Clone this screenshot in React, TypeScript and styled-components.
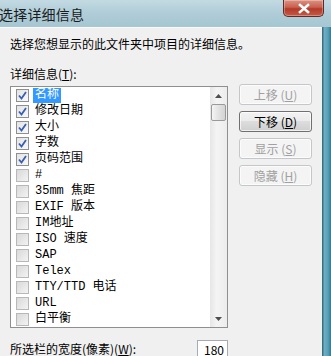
import React from "react";
import styled, { createGlobalStyle } from "styled-components";

// Column choices shown in the list (checked = visible in the folder view)
const columns: { name: string; checked: boolean }[] = [
  { name: "名称", checked: true },
  { name: "修改日期", checked: true },
  { name: "大小", checked: true },
  { name: "字数", checked: true },
  { name: "页码范围", checked: true },
  { name: "#", checked: false },
  { name: "35mm 焦距", checked: false },
  { name: "EXIF 版本", checked: false },
  { name: "IM地址", checked: false },
  { name: "ISO 速度", checked: false },
  { name: "SAP", checked: false },
  { name: "Telex", checked: false },
  { name: "TTY/TTD 电话", checked: false },
  { name: "URL", checked: false },
  { name: "白平衡", checked: false },
];

const buttons = [
  { label: "上移", key: "U", enabled: false },
  { label: "下移", key: "D", enabled: true },
  { label: "显示", key: "S", enabled: false },
  { label: "隐藏", key: "H", enabled: false },
];

const App: React.FC = () => {
  return (
    <>
      <GlobalStyle />
      <Window>
        <TitleBar>
          <Title>选择详细信息</Title>
          <CloseButton>
            <svg width="14" height="11" viewBox="0 0 14 11">
              <path d="M3 2 L11 9 M11 2 L3 9" stroke="#ffffff" strokeWidth="2.6" strokeLinecap="square" />
            </svg>
          </CloseButton>
        </TitleBar>
        <Body>
          <Content>
            <Intro>选择您想显示的此文件夹中项目的详细信息。</Intro>
            <Label>
              详细信息(<u>T</u>):
            </Label>
            <ListRow>
              <ListBox>
                <Items>
                  {columns.map((col, i) => (
                    <Item key={col.name}>
                      <CheckBox $checked={col.checked}>
                        {col.checked && (
                          <svg width="9" height="9" viewBox="0 0 9 9">
                            <path d="M1 4.5 L3.5 7.5 L8 1" stroke="#3a5fb0" strokeWidth="1.8" fill="none" />
                          </svg>
                        )}
                      </CheckBox>
                      <ItemText $selected={i === 0}>{col.name}</ItemText>
                    </Item>
                  ))}
                </Items>
                <ScrollBar>
                  <Arrow>
                    <svg width="7" height="4" viewBox="0 0 7 4">
                      <path d="M3.5 0 L7 4 L0 4 Z" fill="#4d4d4d" />
                    </svg>
                  </Arrow>
                  <Thumb />
                  <Track />
                  <Arrow>
                    <svg width="7" height="4" viewBox="0 0 7 4">
                      <path d="M0 0 L7 0 L3.5 4 Z" fill="#4d4d4d" />
                    </svg>
                  </Arrow>
                </ScrollBar>
              </ListBox>
              <ButtonColumn>
                {buttons.map((b) => (
                  <Button key={b.label} $enabled={b.enabled}>
                    {b.label} (<u>{b.key}</u>)
                  </Button>
                ))}
              </ButtonColumn>
            </ListRow>
            <WidthRow>
              <Label>
                所选栏的宽度(像素)(<u>W</u>):
              </Label>
              <WidthInput>180</WidthInput>
            </WidthRow>
          </Content>
          <RightFrame />
        </Body>
      </Window>
    </>
  );
};

const GlobalStyle = createGlobalStyle`
  html, body {
    margin: 0;
    padding: 0;
    overflow: hidden;
  }
  body {
    font-family: "Noto Sans CJK SC", "DejaVu Sans", sans-serif;
    font-size: 12px;
    color: #000;
  }
`;

const Window = styled.div`
  width: 331px;
  height: 356px;
  display: flex;
  flex-direction: column;
  overflow: hidden;
  background: #a9cad6;
`;

const TitleBar = styled.div`
  height: 27px;
  flex: none;
  display: flex;
  justify-content: space-between;
  align-items: flex-start;
  background: linear-gradient(180deg, #c4dae3 0%, #b0cdd8 45%, #a5c6d2 100%);
`;

const Title = styled.div`
  margin: 5px 0 0 -1px;
  font-size: 14px;
  line-height: 18px;
  color: #1b1b1b;
  letter-spacing: 0.2px;
`;

const CloseButton = styled.div`
  width: 41px;
  height: 17px;
  margin-right: 7px;
  display: flex;
  align-items: center;
  justify-content: center;
  border: 1px solid #5e2c28;
  border-top: none;
  border-radius: 0 0 5px 5px;
  box-sizing: border-box;
  background: linear-gradient(180deg, #dc9384 0%, #c9604f 45%, #b23a2a 55%, #c65a44 100%);
  box-shadow: inset 0 0 0 1px rgba(255, 255, 255, 0.3);
`;

const Body = styled.div`
  flex: 1;
  display: flex;
  min-height: 0;
`;

const Content = styled.div`
  flex: 1;
  display: flex;
  flex-direction: column;
  background: #f0f0f0;
  border-top: 1px solid #fbfbfb;
  padding: 8px 0 0 10px;
  box-sizing: border-box;
`;

const RightFrame = styled.div`
  width: 9px;
  flex: none;
  background: linear-gradient(90deg, #3d6f80 0px, #3d6f80 1px, #6fb0c6 2px, #5a9fb6 6px, #2f7894 9px);
`;

const Intro = styled.div`
  line-height: 16px;
`;

const Label = styled.div`
  line-height: 16px;
  margin-top: 14px;
  u {
    text-decoration: underline;
  }
`;

const ListRow = styled.div`
  display: flex;
  align-items: flex-start;
  margin-top: 4px;
  gap: 11px;
`;

const ListBox = styled.div`
  width: 218px;
  height: 242px;
  border: 1px solid #8e8f8f;
  box-sizing: border-box;
  background: #fff;
  display: flex;
`;

const Items = styled.div`
  flex: 1;
  display: flex;
  flex-direction: column;
`;

const Item = styled.div`
  height: 16px;
  display: flex;
  align-items: center;
  padding-left: 5px;
`;

const CheckBox = styled.div<{ $checked: boolean }>`
  width: 13px;
  height: 13px;
  box-sizing: border-box;
  border: 1px solid ${(p) => (p.$checked ? "#8f8f8f" : "#b8b8b8")};
  background: ${(p) =>
    p.$checked
      ? "linear-gradient(135deg, #e4e4e4, #f8f8f8)"
      : "linear-gradient(135deg, #d9d9d9, #f3f3f3)"};
  display: flex;
  align-items: center;
  justify-content: center;
  flex: none;
`;

const ItemText = styled.span<{ $selected: boolean }>`
  margin-left: 4px;
  padding: 0 2px;
  line-height: 15px;
  font-family: "Liberation Mono", "Noto Sans CJK SC", monospace;
  font-size: 12px;
  color: ${(p) => (p.$selected ? "#fff" : "#000")};
  background: ${(p) => (p.$selected ? "#3399ff" : "transparent")};
`;

const ScrollBar = styled.div`
  width: 17px;
  flex: none;
  display: flex;
  flex-direction: column;
  background: linear-gradient(90deg, #e6e6e6, #f4f4f4 40%, #ececec);
`;

const Arrow = styled.div`
  height: 17px;
  display: flex;
  align-items: center;
  justify-content: center;
`;

const Thumb = styled.div`
  height: 15px;
  margin: 0 1px;
  border: 1px solid #9a9a9a;
  border-radius: 2px;
  background: linear-gradient(90deg, #f4f4f4, #e2e2e2 50%, #d4d4d4);
`;

const Track = styled.div`
  flex: 1;
`;

const ButtonColumn = styled.div`
  display: flex;
  flex-direction: column;
  gap: 6px;
  margin-top: -2px;
`;

const Button = styled.div<{ $enabled: boolean }>`
  width: 73px;
  height: 21px;
  box-sizing: border-box;
  display: flex;
  align-items: center;
  justify-content: center;
  border-radius: 3px;
  font-size: 12px;
  white-space: pre;
  border: 1px solid ${(p) => (p.$enabled ? "#707070" : "#c4c7c9")};
  color: ${(p) => (p.$enabled ? "#000" : "#a0a0a0")};
  background: ${(p) =>
    p.$enabled
      ? "linear-gradient(180deg, #f2f2f2 0%, #ebebeb 45%, #dddddd 50%, #cfcfcf 100%)"
      : "#f4f4f4"};
  box-shadow: inset 0 0 0 1px rgba(255, 255, 255, 0.7);
`;

const WidthRow = styled.div`
  display: flex;
  align-items: flex-start;
  justify-content: space-between;
  width: 218px;
  margin-top: -1px;
`;

const WidthInput = styled.div`
  width: 31px;
  height: 20px;
  margin-top: 13px;
  box-sizing: border-box;
  border: 1px solid #a5acb5;
  background: #fff;
  text-align: right;
  padding-right: 3px;
  line-height: 18px;
`;

export default App;
